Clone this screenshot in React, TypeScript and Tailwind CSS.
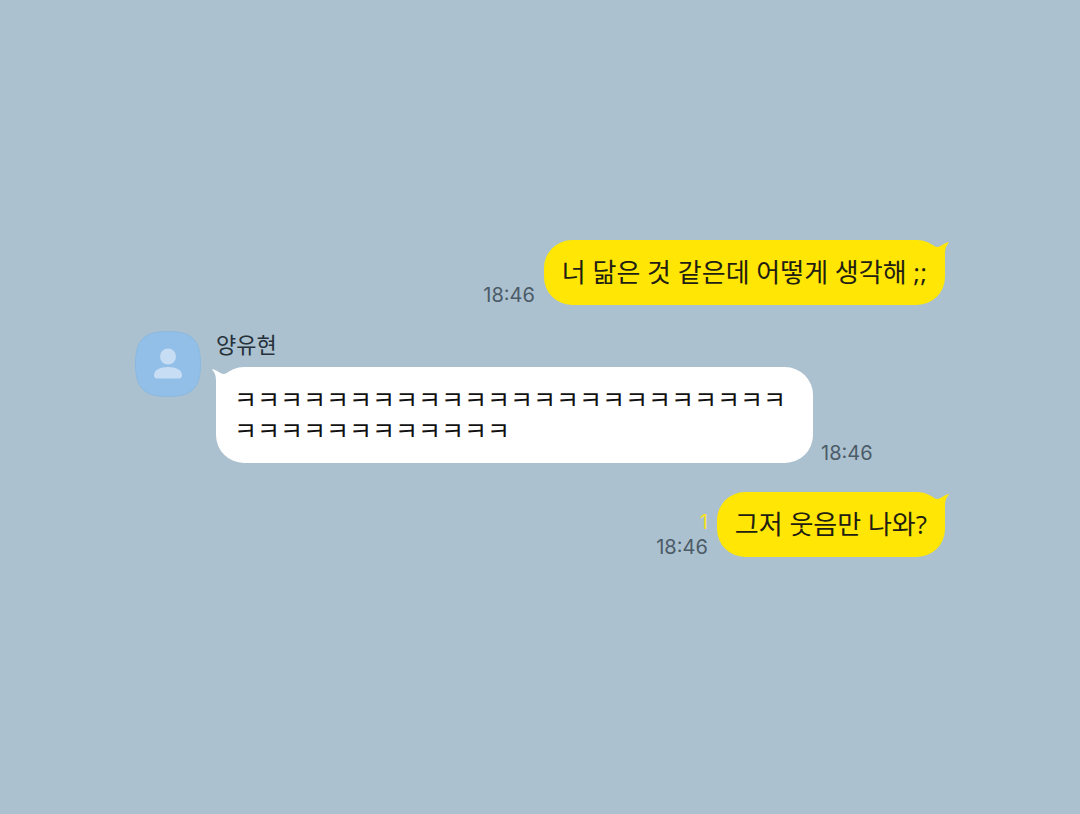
import type { ReactNode } from "react";

type Message = {
  id: number;
  text: string;
  time: string;
  mine: boolean;
  unread?: number;
};

const messages: Message[] = [
  { id: 1, text: "너 닮은 것 같은데 어떻게 생각해 ;;", time: "18:46", mine: true },
  { id: 2, text: "ㅋ".repeat(36), time: "18:46", mine: false },
  { id: 3, text: "그저 웃음만 나와?", time: "18:46", mine: true, unread: 1 },
];

function Tail({ mine }: { mine: boolean }) {
  return (
    <svg
      aria-hidden="true"
      viewBox="0 0 16 26"
      className={
        mine
          ? "absolute -right-1 top-0.5 h-[26px] w-4 text-[#ffe604]"
          : "absolute -left-1 top-0.5 h-[26px] w-4 -scale-x-100 text-white"
      }
    >
      <path
        fill="currentColor"
        d="M0 4 L4 5 C8.500 4.600 11 1.200 15 0.300 C15.800 0.100 16 0.500 15.600 1 C13.200 3.800 12 6.500 12 12 V26 L3 14 Z"
      />
    </svg>
  );
}

function Bubble({ mine, children }: { mine: boolean; children: ReactNode }) {
  return (
    <div
      className={
        mine
          ? "relative rounded-[28px] bg-[#ffe604] px-[18px] py-[17px] text-[26px] leading-[31px] text-[#211d12]"
          : "relative max-w-[597px] rounded-[28px] bg-white px-[18px] py-[17px] text-[25px] leading-[31px] text-[#111]"
      }
    >
      <Tail mine={mine} />
      <p className="relative break-all">{children}</p>
    </div>
  );
}

function Stamp({ time, unread }: { time: string; unread?: number }) {
  return (
    <div className="flex shrink-0 flex-col items-end gap-[5px] font-['Inter','Noto_Sans_CJK_KR',sans-serif] text-[20px] leading-5 text-[#4c5b68]">
      {unread ? <span className="text-[#f9e225]">{unread}</span> : null}
      <time>{time}</time>
    </div>
  );
}

function Avatar() {
  return (
    <svg
      role="img"
      aria-label="양유현"
      viewBox="0 0 66 66"
      className="size-[66px] shrink-0"
    >
      <path
        d="M33 .5 C57 .5 65.5 9 65.5 33 S57 65.5 33 65.5 .5 57 .5 33 9 .5 33 .5Z"
        fill="#92bfe8"
        stroke="#8cb8e0"
      />
      <circle cx="33" cy="25.500" r="8" fill="#c7ddf3" />
      <path
        d="M19 44 C19 39 25 36 33 36 S47 39 47 44 C47 46.500 46 47.500 44 47.500 H22 C20 47.500 19 46.500 19 44Z"
        fill="#c7ddf3"
      />
    </svg>
  );
}

export default function App() {
  return (
    <main className="flex min-h-screen flex-col justify-center gap-[26px] bg-[#abc1cf] px-[12.5%] pb-[17px] font-['Open_Sans','Noto_Sans_CJK_KR',sans-serif]">
      {messages.map((m) =>
        m.mine ? (
          <div key={m.id} className="flex items-end justify-end gap-[9px]">
            <Stamp time={m.time} unread={m.unread} />
            <Bubble mine>{m.text}</Bubble>
          </div>
        ) : (
          <div key={m.id} className="flex items-start gap-[15px] pb-[3px]">
            <Avatar />
            <div>
              <h2 className="mb-[10px] text-[22px] leading-[26px] text-[#26313b]">양유현</h2>
              <div className="flex items-end gap-2">
                <Bubble mine={false}>{m.text}</Bubble>
                <Stamp time={m.time} />
              </div>
            </div>
          </div>
        ),
      )}
    </main>
  );
}
